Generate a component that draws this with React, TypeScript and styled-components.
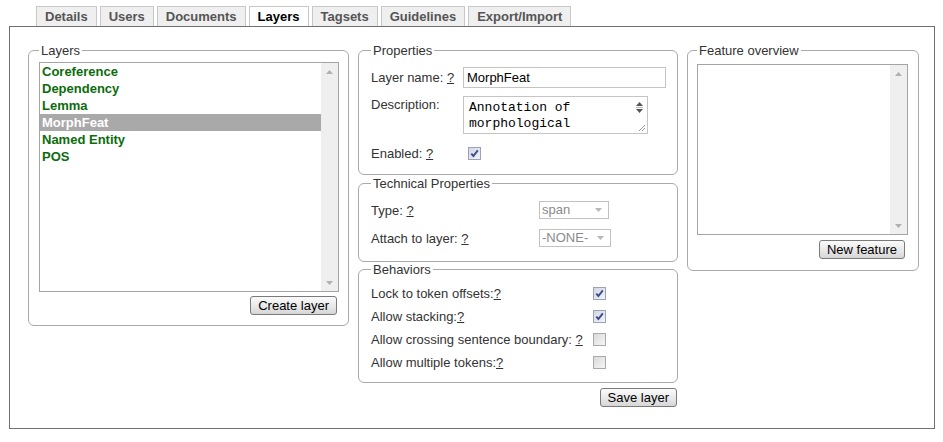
import React from "react";
import styled, { createGlobalStyle } from "styled-components";

const GlobalStyle = createGlobalStyle`
  html, body { margin: 0; padding: 0; background: #fff; }
  body { font-family: "Liberation Sans", Arial, sans-serif; font-size: 13px; color: #333; }
  * { box-sizing: border-box; }
`;

const Page = styled.div`
  width: 943px;
  height: 442px;
  padding: 6px 0 0 9px;
`;

const TabBar = styled.ul`
  display: flex;
  gap: 3px;
  margin: 0 0 0 27px;
  padding: 0;
  list-style: none;
  height: 20px;
`;

const Tab = styled.li<{ $active?: boolean }>`
  height: 20px;
  padding: 0 8px;
  border: 1px solid #c8c8c8;
  border-bottom: none;
  background: ${(p) => (p.$active ? "#fff" : "#efefef")};
  color: ${(p) => (p.$active ? "#000" : "#555")};
  font-weight: bold;
  font-size: 13px;
  line-height: 19px;
  white-space: nowrap;
`;

const Panel = styled.div`
  width: 926px;
  height: 403px;
  border: 1px solid #707070;
  padding: 16px 0 0 18px;
  display: grid;
  grid-template-columns: 321px 320px 232px;
  column-gap: 9px;
  align-items: start;
`;

const Column = styled.div`
  display: flex;
  flex-direction: column;
`;

const Group = styled.fieldset<{ $pad: string; $mt?: number }>`
  margin: ${(p) => p.$mt ?? 0}px 0 0 0;
  min-width: 0;
  border: 1px solid #aaa;
  border-radius: 6px;
  padding: ${(p) => p.$pad};
`;

const Legend = styled.legend`
  padding: 0 2px;
  font-size: 13px;
  line-height: 15px;
  color: #333;
`;

const ListBox = styled.div<{ $h: number }>`
  display: flex;
  height: ${(p) => p.$h}px;
  border: 1px solid #a4a4a4;
  background: #fff;
`;

const ListItems = styled.ul`
  flex: 1;
  margin: 0;
  padding: 0;
  list-style: none;
`;

const ListItem = styled.li<{ $selected?: boolean }>`
  height: 17px;
  line-height: 17px;
  padding-left: 2px;
  font-weight: bold;
  font-size: 13px;
  color: ${(p) => (p.$selected ? "#fff" : "#0c6c0c")};
  background: ${(p) => (p.$selected ? "#a9a9a9" : "transparent")};
`;

const ScrollTrack = styled.div`
  width: 17px;
  background: #efefef;
  display: flex;
  flex-direction: column;
  justify-content: space-between;
  align-items: center;
  padding: 7px 0 6px;
`;

const ButtonRow = styled.div<{ $mt: number; $mr: number }>`
  display: flex;
  justify-content: flex-end;
  margin-top: ${(p) => p.$mt}px;
  margin-right: ${(p) => p.$mr}px;
`;

const Button = styled.button`
  height: 19px;
  padding: 0 7px;
  border: 1px solid #7a7a7a;
  border-radius: 3px;
  background: linear-gradient(#fbfbfb, #e6e6e6 60%, #d6d6d6);
  font-family: "Liberation Sans", Arial, sans-serif;
  font-size: 13px;
  line-height: 17px;
  color: #000;
`;

const Row = styled.div<{ $label: number; $h: number; $mt?: number }>`
  display: grid;
  grid-template-columns: ${(p) => p.$label}px auto;
  justify-items: start;
  align-items: center;
  height: ${(p) => p.$h}px;
  margin-top: ${(p) => p.$mt ?? 0}px;
`;

const Label = styled.span<{ $top?: boolean }>`
  color: #333;
  white-space: nowrap;
  ${(p) => (p.$top ? "align-self: start; padding-top: 1px;" : "")}
`;

const Help = styled.a`
  color: #333;
  text-decoration: underline;
`;

const TextInput = styled.input`
  width: 203px;
  height: 21px;
  border: 1px solid #c4c4c4;
  padding: 0 3px;
  font-family: "Liberation Sans", Arial, sans-serif;
  font-size: 13px;
  color: #000;
  outline: none;
`;

const TextAreaBox = styled.div`
  width: 185px;
  height: 38px;
  border: 1px solid #c4c4c4;
  display: flex;
  overflow: hidden;
`;

const TextBody = styled.div`
  flex: 1;
  padding: 3px 0 0 5px;
  font-family: "Liberation Mono", "Courier New", monospace;
  font-size: 13px;
  line-height: 16px;
  color: #000;
`;

const TextScroll = styled.div`
  width: 16px;
  display: flex;
  flex-direction: column;
  align-items: center;
  padding-top: 5px;
  position: relative;
`;

const Grip = styled.svg`
  position: absolute;
  right: 1px;
  bottom: 1px;
`;

const CheckBox = styled.span<{ $checked?: boolean }>`
  display: inline-flex;
  align-items: center;
  justify-content: center;
  width: 13px;
  height: 13px;
  margin-left: 5px;
  border: 1px solid ${(p) => (p.$checked ? "#9aa3b8" : "#aaaaaa")};
  background: ${(p) =>
    p.$checked
      ? "linear-gradient(135deg, #d2d7e6, #f1f3f8)"
      : "linear-gradient(135deg, #dadada, #f5f5f5)"};
`;

const Select = styled.div<{ $w: number }>`
  width: ${(p) => p.$w}px;
  height: 18px;
  border: 1px solid #c2c2c2;
  color: #8a8a8a;
  font-size: 13px;
  line-height: 16px;
  padding: 0 6px 0 2px;
  display: flex;
  justify-content: space-between;
  align-items: center;
  background: #fff;
`;

const Arrow = ({ up, color = "#b0b0b0" }: { up?: boolean; color?: string }) => (
  <svg width="7" height="4" viewBox="0 0 7 4">
    <path d={up ? "M0 4 L3.5 0 L7 4 Z" : "M0 0 L7 0 L3.5 4 Z"} fill={color} />
  </svg>
);

const Check = ({ checked }: { checked?: boolean }) => (
  <CheckBox $checked={checked}>
    {checked && (
      <svg width="9" height="9" viewBox="0 0 9 9">
        <path d="M1.3 4.6 L3.4 7 L7.8 1.4" fill="none" stroke="#3d4b88" strokeWidth="1.9" />
      </svg>
    )}
  </CheckBox>
);

const tabs = ["Details", "Users", "Documents", "Layers", "Tagsets", "Guidelines", "Export/Import"];
const layers = ["Coreference", "Dependency", "Lemma", "MorphFeat", "Named Entity", "POS"];

export default function App() {
  return (
    <Page>
      <GlobalStyle />
      <TabBar>
        {tabs.map((t) => (
          <Tab key={t} $active={t === "Layers"}>
            {t}
          </Tab>
        ))}
      </TabBar>
      <Panel>
        <Column>
          <Group $pad="4px 9px 10px 10px">
            <Legend>Layers</Legend>
            <ListBox $h={230}>
              <ListItems>
                {layers.map((l) => (
                  <ListItem key={l} $selected={l === "MorphFeat"}>
                    {l}
                  </ListItem>
                ))}
              </ListItems>
              <ScrollTrack>
                <Arrow up />
                <Arrow />
              </ScrollTrack>
            </ListBox>
            <ButtonRow $mt={4} $mr={2}>
              <Button>Create layer</Button>
            </ButtonRow>
          </Group>
        </Column>

        <Column>
          <Group $pad="9px 10px 11px 12px">
            <Legend>Properties</Legend>
            <Row $label={92} $h={21}>
              <Label>
                Layer name: <Help>?</Help>
              </Label>
              <TextInput readOnly value="MorphFeat" />
            </Row>
            <Row $label={92} $h={38} $mt={8}>
              <Label $top>Description:</Label>
              <TextAreaBox>
                <TextBody>Annotation of morphological</TextBody>
                <TextScroll>
                  <Arrow up color="#555" />
                  <svg width="7" height="3" viewBox="0 0 7 3">
                    <path d="M0 1.5 H7" stroke="#bbb" strokeWidth="1" />
                  </svg>
                  <Arrow color="#555" />
                  <Grip width="8" height="8" viewBox="0 0 8 8">
                    <path d="M7 1 L1 7 M7 4 L4 7" stroke="#999" strokeWidth="1" />
                  </Grip>
                </TextScroll>
              </TextAreaBox>
            </Row>
            <Row $label={92} $h={20} $mt={9}>
              <Label>
                Enabled: <Help>?</Help>
              </Label>
              <Check checked />
            </Row>
          </Group>

          <Group $pad="10px 10px 14px 12px" $mt={1}>
            <Legend>Technical Properties</Legend>
            <Row $label={168} $h={18}>
              <Label>
                Type: <Help>?</Help>
              </Label>
              <Select $w={70}>
                <span>span</span>
                <Arrow color="#b8b8b8" />
              </Select>
            </Row>
            <Row $label={168} $h={18} $mt={10}>
              <Label>
                Attach to layer: <Help>?</Help>
              </Label>
              <Select $w={72}>
                <span>-NONE-</span>
                <Arrow color="#b8b8b8" />
              </Select>
            </Row>
          </Group>

          <Group $pad="7px 10px 10px 12px">
            <Legend>Behaviors</Legend>
            <Row $label={217} $h={19}>
              <Label>
                Lock to token offsets:<Help>?</Help>
              </Label>
              <Check checked />
            </Row>
            <Row $label={217} $h={19} $mt={4}>
              <Label>
                Allow stacking:<Help>?</Help>
              </Label>
              <Check checked />
            </Row>
            <Row $label={217} $h={19} $mt={4}>
              <Label>
                Allow crossing sentence boundary: <Help>?</Help>
              </Label>
              <Check />
            </Row>
            <Row $label={217} $h={19} $mt={4}>
              <Label>
                Allow multiple tokens:<Help>?</Help>
              </Label>
              <Check />
            </Row>
          </Group>
          <ButtonRow $mt={5} $mr={1}>
            <Button>Save layer</Button>
          </ButtonRow>
        </Column>

        <Column>
          <Group $pad="6px 10px 11px 9px">
            <Legend>Feature overview</Legend>
            <ListBox $h={171}>
              <ListItems />
              <ScrollTrack>
                <Arrow up />
                <Arrow />
              </ScrollTrack>
            </ListBox>
            <ButtonRow $mt={5} $mr={3}>
              <Button>New feature</Button>
            </ButtonRow>
          </Group>
        </Column>
      </Panel>
    </Page>
  );
}
